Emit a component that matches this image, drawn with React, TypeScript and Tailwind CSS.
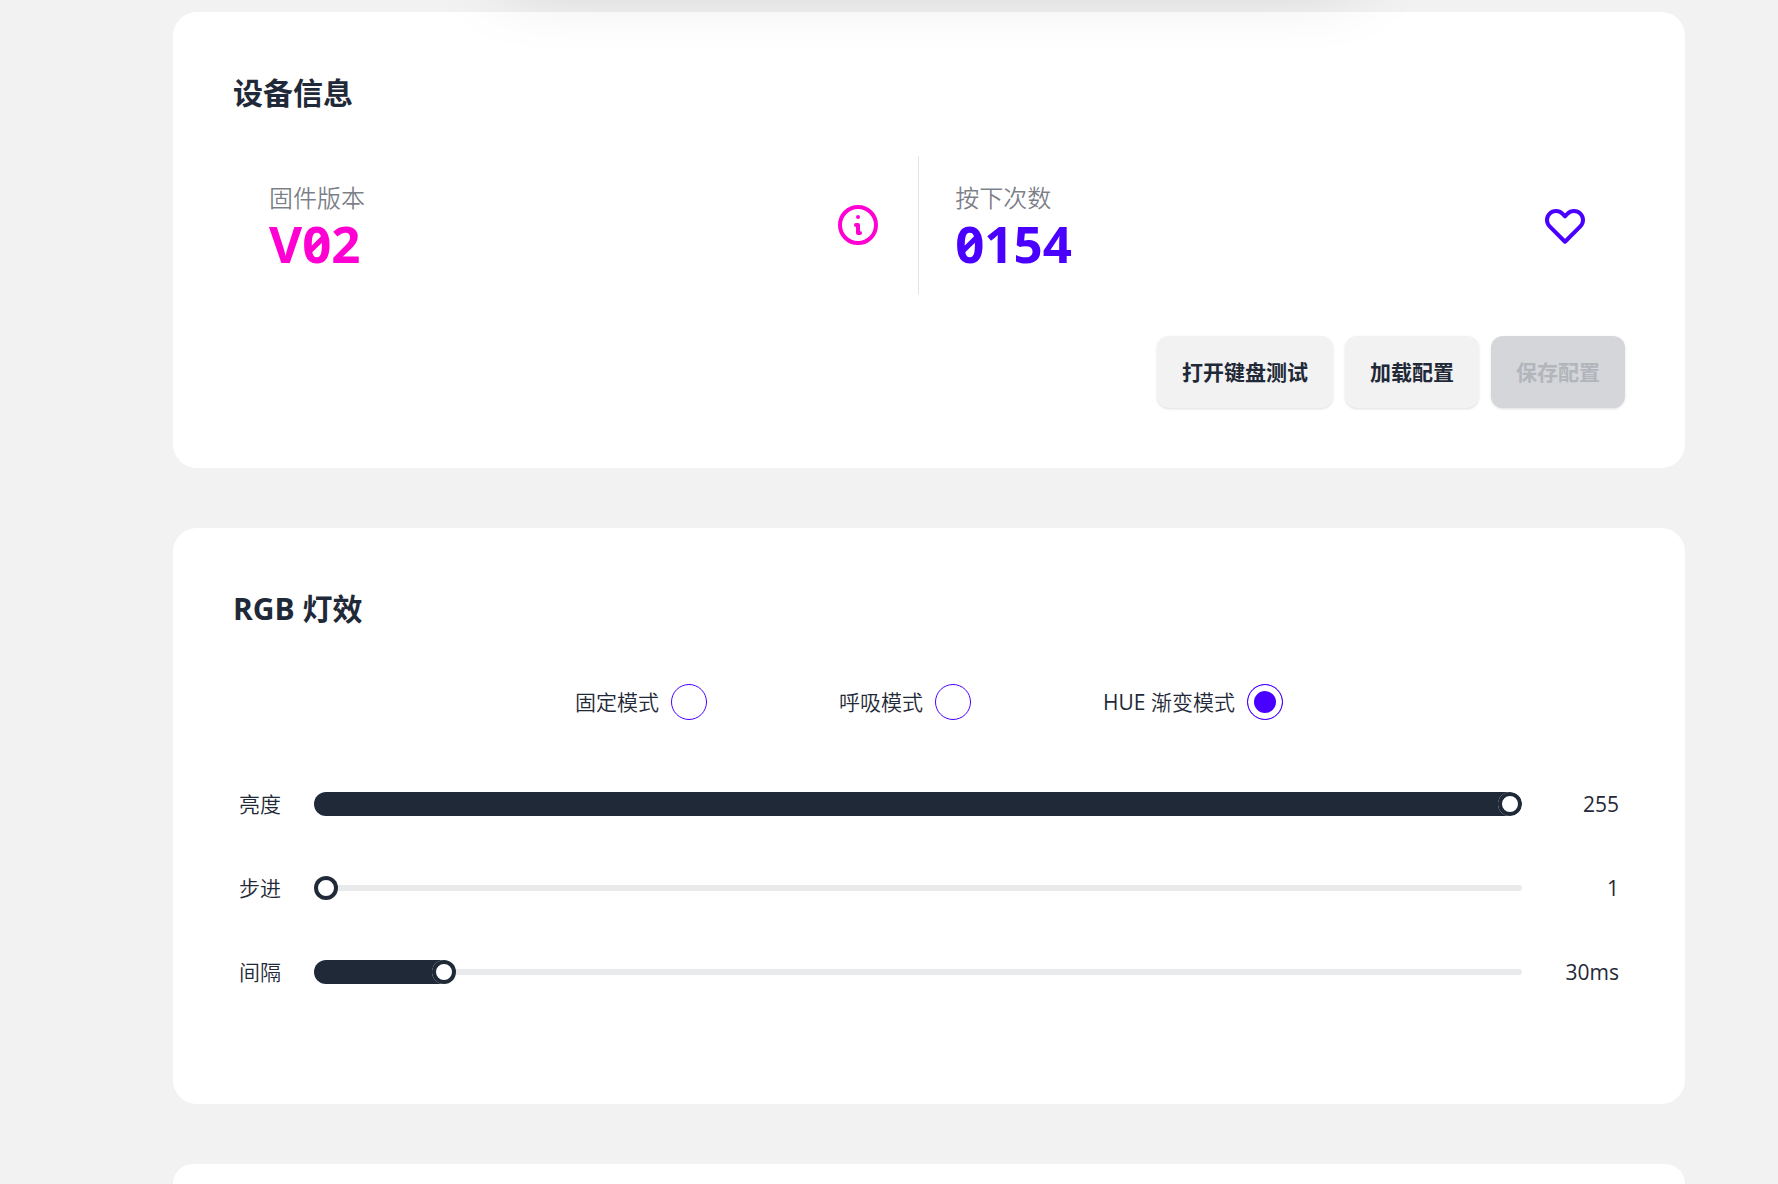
import { useState } from 'react'

type Mode = 'static' | 'breath' | 'hue'

const modes: { id: Mode; prefix?: string; label: string }[] = [
    { id: 'static', label: '固定模式' },
    { id: 'breath', label: '呼吸模式' },
    { id: 'hue', prefix: 'HUE ', label: '渐变模式' },
]

interface SliderProps {
    id: string
    label: string
    min: number
    max: number
    value: number
    unit?: string
    onChange: (value: number) => void
}

function InfoIcon() {
    return (
        <svg className="h-12 w-12" fill="none" viewBox="0 0 24 24" stroke="currentColor" strokeWidth="2" strokeLinecap="round" strokeLinejoin="round" aria-hidden="true">
            <path d="M13 16h-1v-4h-1m1-4h.01M21 12a9 9 0 11-18 0 9 9 0 0118 0z" />
        </svg>
    )
}

function HeartIcon() {
    return (
        <svg className="h-12 w-12" fill="none" viewBox="0 0 24 24" stroke="currentColor" strokeWidth="2" strokeLinecap="round" strokeLinejoin="round" aria-hidden="true">
            <path d="M4.318 6.318a4.5 4.5 0 000 6.364L12 20.364l7.682-7.682a4.5 4.5 0 00-6.364-6.364L12 7.636l-1.318-1.318a4.5 4.5 0 00-6.364 0z" />
        </svg>
    )
}

function Slider({ id, label, min, max, value, unit = '', onChange }: SliderProps) {
    return (
        <div className="flex h-[84px] items-center px-1.5">
            <label htmlFor={id} className="w-[75px] shrink-0 font-[350]">{label}</label>
            {/* the filled part is the thumb's own shadow, clipped by the input */}
            <input
                id={id}
                type="range"
                min={min}
                max={max}
                value={value}
                onChange={(e) => onChange(Number(e.target.value))}
                className="h-6 min-w-0 flex-1 cursor-pointer appearance-none overflow-hidden rounded-full bg-transparent [&::-webkit-slider-runnable-track]:h-1.5 [&::-webkit-slider-runnable-track]:rounded-full [&::-webkit-slider-runnable-track]:bg-[#e9eaeb] [&::-webkit-slider-thumb]:-mt-[9px] [&::-webkit-slider-thumb]:h-6 [&::-webkit-slider-thumb]:w-6 [&::-webkit-slider-thumb]:appearance-none [&::-webkit-slider-thumb]:rounded-full [&::-webkit-slider-thumb]:bg-white [&::-webkit-slider-thumb]:shadow-[inset_0_0_0_4px_#1f2937,-2412px_0_0_2400px_#1f2937]"
            />
            <output htmlFor={id} className="w-[97px] shrink-0 text-right">{value}{unit}</output>
        </div>
    )
}

export default function App() {
    const [mode, setMode] = useState<Mode>('hue')
    const [brightness, setBrightness] = useState(255)
    const [step, setStep] = useState(1)
    const [interval, setInterval] = useState(30)

    return (
        <div className="relative flex min-h-screen flex-col overflow-hidden bg-[#f2f2f2] pt-3 pl-20 font-['Open_Sans','Noto_Sans_CJK_SC',sans-serif] text-[21px] leading-[30px] text-[#1f2937]">
            <main className="mx-auto flex w-full max-w-[1512px] flex-1 flex-col gap-[60px]">
                <section className="flex flex-col gap-[42px] rounded-3xl bg-white p-[60px]">
                    <h2 className="text-[30px] leading-[42px] font-bold">设备信息</h2>
                    <div className="grid grid-cols-[auto_auto]">
                        <div className="flex items-center justify-between border-r border-[#e3e4e6] px-9 py-6">
                            <div>
                                <div className="text-2xl leading-9 font-[350] text-[#1f2937]/60">固件版本</div>
                                <div className="font-['Noto_Sans',sans-serif] text-[51px] leading-[54px] font-bold slashed-zero text-[#ff00d3]">V02</div>
                            </div>
                            <span className="text-[#ff00d3]"><InfoIcon /></span>
                        </div>
                        <div className="flex items-center justify-between px-9 py-6">
                            <div>
                                <div className="text-2xl leading-9 font-[350] text-[#1f2937]/60">按下次数</div>
                                <div className="font-['Noto_Sans',sans-serif] text-[51px] leading-[54px] font-bold slashed-zero text-[#4a00ff]">0154</div>
                            </div>
                            <span className="text-[#4a00ff]"><HeartIcon /></span>
                        </div>
                    </div>
                    <div className="flex justify-end gap-3 font-bold">
                        <button className="h-[72px] cursor-pointer rounded-xl bg-[#f2f2f2] px-[25px] shadow-sm">打开键盘测试</button>
                        <button className="h-[72px] cursor-pointer rounded-xl bg-[#f2f2f2] px-[25px] shadow-sm">加载配置</button>
                        <button className="h-[72px] rounded-xl bg-[#d4d6da] px-[25px] text-[#b2b5ba] shadow-sm" disabled>保存配置</button>
                    </div>
                </section>

                <section className="rounded-3xl bg-white px-[60px] pt-[60px] pb-[90px]">
                    <h2 className="text-[30px] leading-[42px] font-bold">RGB 灯效</h2>
                    <div className="mt-[54px] flex justify-center gap-[132px]">
                        {modes.map((m) => (
                            <label key={m.id} className="flex cursor-pointer items-center gap-3">
                                <span>{m.prefix}<span className="font-[350]">{m.label}</span></span>
                                <input
                                    type="radio"
                                    name="mode"
                                    checked={mode === m.id}
                                    onChange={() => setMode(m.id)}
                                    className="h-9 w-9 cursor-pointer appearance-none rounded-full border border-[#4a00ff] checked:bg-[#4a00ff] checked:shadow-[inset_0_0_0_6px_#ffffff]"
                                />
                            </label>
                        ))}
                    </div>
                    <div className="mt-[42px]">
                        <Slider id="brightness" label="亮度" min={0} max={255} value={brightness} onChange={setBrightness} />
                        <Slider id="step" label="步进" min={1} max={50} value={step} onChange={setStep} />
                        <Slider id="interval" label="间隔" min={0} max={300} value={interval} unit="ms" onChange={setInterval} />
                    </div>
                </section>

                <section className="min-h-5 flex-1 rounded-t-3xl bg-white"></section>
            </main>

            <div className="pointer-events-none absolute inset-x-0 -top-[169px] flex justify-center pl-20">
                <div className="h-[120px] w-[884px] rounded-3xl bg-white shadow-[0_38px_75px_-18px_rgb(0_0_0/0.25)]"></div>
            </div>
        </div>
    )
}
